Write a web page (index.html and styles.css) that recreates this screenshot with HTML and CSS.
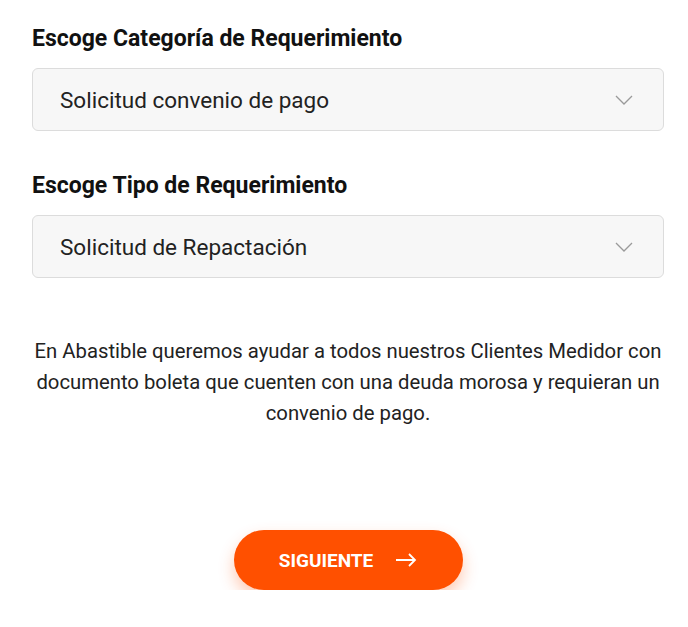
FILE: index.html
```html
<!DOCTYPE html>
<html lang="es">
<head>
    <meta charset="UTF-8">
    <meta name="viewport" content="width=device-width, initial-scale=1.0">
    <title>Requerimiento</title>
    <link rel="stylesheet" href="styles.css">
</head>
<body>
    <div class="form-wrap">
        <div class="field">
            <label class="field-label">Escoge Categoría de Requerimiento</label>
            <div class="select">
                <span>Solicitud convenio de pago</span>
                <svg class="chevron" width="18" height="10" viewBox="0 0 18 10"><path d="M1 1l8 8 8-8" fill="none" stroke="#9a9a9a" stroke-width="1.3"/></svg>
            </div>
        </div>
        <div class="field">
            <label class="field-label">Escoge Tipo de Requerimiento</label>
            <div class="select">
                <span>Solicitud de Repactación</span>
                <svg class="chevron" width="18" height="10" viewBox="0 0 18 10"><path d="M1 1l8 8 8-8" fill="none" stroke="#9a9a9a" stroke-width="1.3"/></svg>
            </div>
        </div>
        <p class="info">En Abastible queremos ayudar a todos nuestros Clientes Medidor con documento boleta que cuenten con una deuda morosa y requieran un convenio de pago.</p>
        <div class="actions">
            <button class="btn-next" type="button">
                SIGUIENTE
                <svg width="22" height="14" viewBox="0 0 22 14"><path d="M1 7h19M14 1l6 6-6 6" fill="none" stroke="#fff" stroke-width="1.8"/></svg>
            </button>
        </div>
    </div>
</body>
</html>
```

FILE: styles.css
```css
body {
    margin: 0;
    padding: 0;
    font-family: Roboto, "Noto Sans", sans-serif;
    background-color: #ffffff;
    color: #1a1a1a;
}

.form-wrap {
    padding: 24px 24px 0 32px;
    display: flex;
    flex-direction: column;
}

.field {
    display: flex;
    flex-direction: column;
    margin-bottom: 40px;
}

.field-label {
    font-size: 23px;
    font-weight: 700;
    color: #111;
    line-height: 30px;
    margin-bottom: 14px;
}

.select {
    height: 61px;
    border: 1px solid #dcdcdc;
    border-radius: 6px;
    background-color: #f7f7f7;
    display: flex;
    align-items: center;
    justify-content: space-between;
    padding: 0 30px 0 27px;
    font-size: 22.5px;
    color: #222;
}

.info {
    margin: 18px -6px 0;
    text-align: center;
    font-size: 20.3px;
    line-height: 31px;
    color: #222;
}

.actions {
    display: flex;
    justify-content: center;
    margin-top: 101px;
}

.btn-next {
    width: 229px;
    height: 60px;
    border: none;
    border-radius: 30px;
    background-color: #ff5000;
    color: #fff;
    font-family: Roboto, sans-serif;
    font-size: 19px;
    font-weight: 700;
    display: flex;
    align-items: center;
    justify-content: center;
    gap: 22px;
    box-shadow: 0 8px 16px rgba(255, 80, 0, 0.3);
    cursor: pointer;
}
```
